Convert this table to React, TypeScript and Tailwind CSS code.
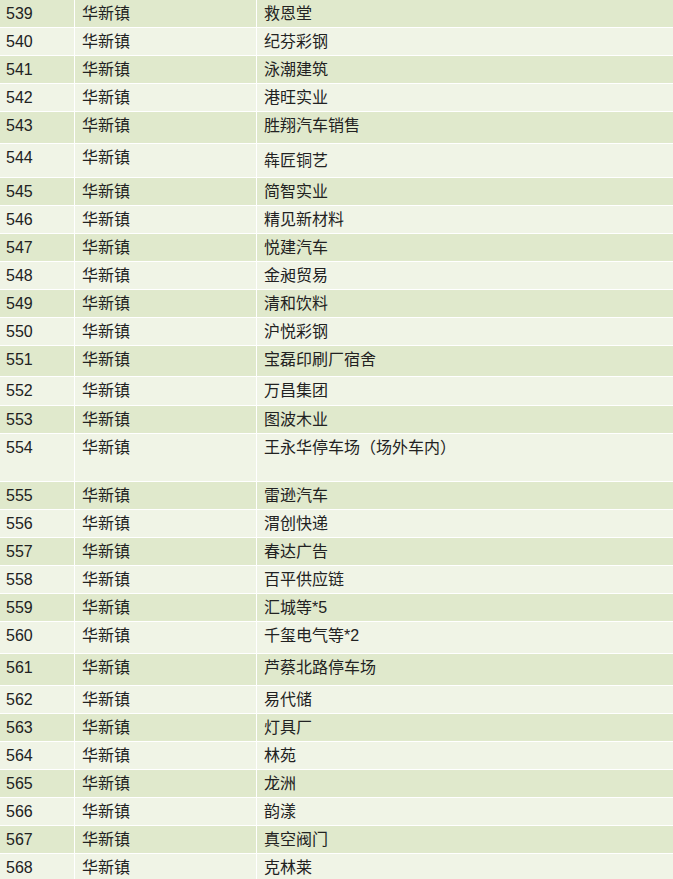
const rows: [string, string, string][] = [
  ["539", "救恩堂", "h-[27px]"],
  ["540", "纪芬彩钢", "h-[27px]"],
  ["541", "泳潮建筑", "h-[27px]"],
  ["542", "港旺实业", "h-[27px]"],
  ["543", "胜翔汽车销售", "h-[31px]"],
  ["544", "犇匠铜艺", "h-[33px]"],
  ["545", "简智实业", "h-[27px]"],
  ["546", "精见新材料", "h-[27px]"],
  ["547", "悦建汽车", "h-[27px]"],
  ["548", "金昶贸易", "h-[27px]"],
  ["549", "清和饮料", "h-[27px]"],
  ["550", "沪悦彩钢", "h-[27px]"],
  ["551", "宝磊印刷厂宿舍", "h-[30px]"],
  ["552", "万昌集团", "h-[28px]"],
  ["553", "图波木业", "h-[27px]"],
  ["554", "王永华停车场（场外车内）", "h-[47px]"],
  ["555", "雷逊汽车", "h-[27px]"],
  ["556", "渭创快递", "h-[27px]"],
  ["557", "春达广告", "h-[27px]"],
  ["558", "百平供应链", "h-[27px]"],
  ["559", "汇城等*5", "h-[27px]"],
  ["560", "千玺电气等*2", "h-[31px]"],
  ["561", "芦蔡北路停车场", "h-[31px]"],
  ["562", "易代储", "h-[27px]"],
  ["563", "灯具厂", "h-[27px]"],
  ["564", "林苑", "h-[27px]"],
  ["565", "龙洲", "h-[27px]"],
  ["566", "韵漾", "h-[27px]"],
  ["567", "真空阀门", "h-[27px]"],
  ["568", "克林莱", "h-[27px]"],
]

export default function App() {
  return (
    <div
      className="flex h-[879px] w-[673px] flex-col gap-px overflow-hidden bg-white text-[16px] leading-[20px] text-[#222]"
      style={{ fontFamily: '"Liberation Sans", Arial, "Noto Sans CJK SC", sans-serif' }}
    >
      {rows.map(([num, name, h], i) => {
        const bg = i % 2 === 0 ? "bg-[#e0e9cc]" : "bg-[#f0f4e6]"
        return (
          <div key={num} className={`grid shrink-0 grid-cols-[74px_181px_1fr] gap-px ${h}`}>
            <div className={`${bg} pl-[6px] pt-[4px]`}>{num}</div>
            <div className={`${bg} pl-[7px] pt-[4px]`}>华新镇</div>
            <div className={`${bg} pl-[7px] ${num === "544" ? "pt-[7px]" : "pt-[4px]"}`}>{name}</div>
          </div>
        )
      })}
    </div>
  )
}
